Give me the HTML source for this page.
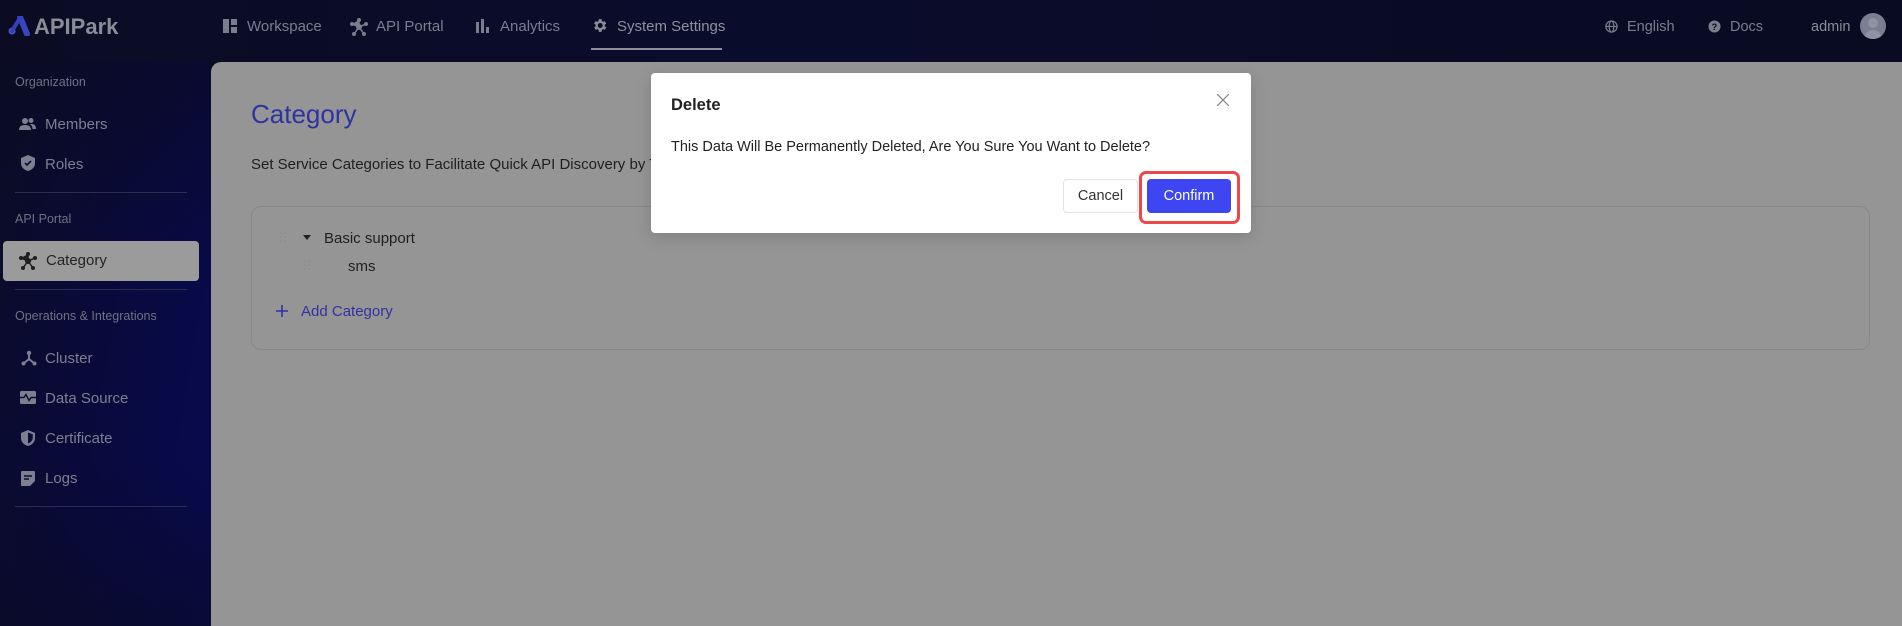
<!DOCTYPE html>
<html><head><meta charset="utf-8"><style>
*{box-sizing:border-box;margin:0;padding:0}
body{width:1902px;height:626px;overflow:hidden;font-family:"Liberation Sans",sans-serif;position:relative;background:#0a0b22}
.nav{position:absolute;left:0;top:0;width:1902px;height:62px;background:linear-gradient(90deg,#0b0c24 0%,#0a0c2c 40%,#090b22 100%)}
.side{position:absolute;left:0;top:62px;width:211px;height:564px;background:linear-gradient(100deg,#0b0c26 0%,#090a3c 50%,#070a52 100%)}
.side2{position:absolute;left:0;top:62px;width:211px;height:564px;background:linear-gradient(180deg,rgba(10,11,34,.6) 0%,rgba(10,11,34,0) 40%,rgba(10,11,34,0) 70%,rgba(10,11,34,.6) 100%)}
.main{position:absolute;left:211px;top:62px;width:1691px;height:564px;background:#959595;border-top-left-radius:10px}
.t{position:absolute;white-space:nowrap}
.nv{color:#7b7d8e;font-size:15px;top:18px}
.sl{color:#6f7184;font-size:12.5px}
.si{color:#7d7f91;font-size:15px}
.ic{position:absolute}
.div{position:absolute;left:38px;width:149px;height:1px;background:#2a2c50}
</style></head><body>
<div class="nav"></div>
<div class="side"></div>
<div class="side2"></div>
<div class="main"></div>

<svg class="ic" style="left:7px;top:16px" width="24" height="20" viewBox="0 0 24 20"><path d="M13 1 L20 18" stroke="#3a45c0" stroke-width="6" stroke-linecap="round"/><circle cx="5" cy="15" r="3.5" fill="#4a55c8"/><path d="M5 15 L13 2" stroke="#3540b8" stroke-width="4" stroke-linecap="round"/></svg>
<div class="t" style="left:34px;top:14px;font-size:22px;font-weight:bold;color:#8a8c98">APIPark</div>

<svg class="ic" style="left:223px;top:19px" width="14" height="14"><rect x="0" y="0" width="6" height="14" fill="#7b7d8e"/><rect x="8" y="0" width="6" height="6" fill="#7b7d8e"/><rect x="8" y="8" width="6" height="6" fill="#7b7d8e"/></svg>
<div class="t nv" style="left:247px">Workspace</div>
<svg class="ic" style="left:350px;top:18px" width="18" height="18" viewBox="0 0 18 18" fill="#7b7d8e"><circle cx="9" cy="9" r="3"/><circle cx="9" cy="2" r="2"/><circle cx="2" cy="6" r="2"/><circle cx="16" cy="6" r="2"/><circle cx="4" cy="16" r="2"/><circle cx="14" cy="16" r="2"/><path d="M9 2V9L2 6M9 9L16 6M9 9L4 16M9 9L14 16" stroke="#7b7d8e" stroke-width="1.5"/></svg>
<div class="t nv" style="left:376px">API Portal</div>
<svg class="ic" style="left:476px;top:19px" width="14" height="14"><rect x="0" y="3" width="3" height="11" fill="#7b7d8e"/><rect x="5" y="0" width="3" height="14" fill="#7b7d8e"/><rect x="10" y="8" width="3" height="6" fill="#7b7d8e"/></svg>
<div class="t nv" style="left:500px">Analytics</div>
<svg class="ic" style="left:591px;top:17px" width="17" height="17" viewBox="0 0 24 24"><path fill="#8a8c9a" d="M19.4 13a7.5 7.5 0 0 0 0-2l2.1-1.6-2-3.5-2.5 1a7 7 0 0 0-1.7-1L15 3h-4l-.4 2.9a7 7 0 0 0-1.7 1l-2.5-1-2 3.5L6.6 11a7.5 7.5 0 0 0 0 2l-2.1 1.6 2 3.5 2.5-1a7 7 0 0 0 1.7 1L11 21h4l.4-2.9a7 7 0 0 0 1.7-1l2.5 1 2-3.5zM13 15.5a3.5 3.5 0 1 1 0-7 3.5 3.5 0 0 1 0 7z"/></svg>
<div class="t nv" style="left:617px;color:#8e909c">System Settings</div>
<div class="ic" style="left:591px;top:48px;width:131px;height:2px;background:#8a8c98"></div>

<svg class="ic" style="left:1605px;top:20px" width="13" height="13" viewBox="0 0 14 14" fill="none" stroke="#7b7d8e" stroke-width="1.3"><circle cx="7" cy="7" r="6"/><ellipse cx="7" cy="7" rx="2.5" ry="6"/><path d="M1 7h12"/></svg>
<div class="t nv" style="left:1627px;font-size:14.5px;top:19px">English</div>
<svg class="ic" style="left:1708px;top:20px" width="13" height="13" viewBox="0 0 14 14"><circle cx="7" cy="7" r="6.5" fill="#7b7d8e"/><text x="7" y="11" font-size="10" font-weight="bold" text-anchor="middle" fill="#0a0c22" font-family="Liberation Sans">?</text></svg>
<div class="t nv" style="left:1730px;font-size:14.5px;top:19px">Docs</div>
<div class="t nv" style="left:1811px;font-size:14.5px;top:19px;color:#8a8c98">admin</div>
<div class="ic" style="left:1860px;top:13px;width:26px;height:26px;border-radius:50%;background:#7a7e92;overflow:hidden"><div style="position:absolute;left:8px;top:5px;width:10px;height:10px;border-radius:50%;background:#8e92a4"></div><div style="position:absolute;left:4px;top:17px;width:18px;height:12px;border-radius:9px 9px 0 0;background:#8e92a4"></div></div>

<div class="t sl" style="left:15px;top:75px">Organization</div>
<svg class="ic" style="left:19px;top:117px" width="17" height="14" viewBox="0 0 17 14" fill="#7d7f91"><circle cx="6" cy="4" r="3"/><path d="M0 13c0-4 3-5 6-5s6 1 6 5z"/><circle cx="12" cy="3.5" r="2.5"/><path d="M12 7c3 0 5 1 5 5h-3.5c0-2-1-4-2.5-4.6z"/></svg>
<div class="t si" style="left:45px;top:116px">Members</div>
<svg class="ic" style="left:21px;top:155px" width="14" height="16" viewBox="0 0 14 16"><path d="M7 0L14 3v5c0 4-3 7-7 8-4-1-7-4-7-8V3z" fill="#7d7f91"/><path d="M4 8l2 2 4-4" stroke="#0a0b2e" stroke-width="1.6" fill="none"/></svg>
<div class="t si" style="left:45px;top:156px">Roles</div>
<div class="div" style="left:15px;top:192px;width:172px"></div>
<div class="t sl" style="left:15px;top:212px">API Portal</div>
<div class="ic" style="left:3px;top:241px;width:196px;height:40px;background:#9b9b9b;border-radius:4px"></div>
<svg class="ic" style="left:19px;top:252px" width="18" height="18" viewBox="0 0 18 18" fill="#1e1e1e"><circle cx="9" cy="9" r="3"/><circle cx="9" cy="2" r="2"/><circle cx="2" cy="6" r="2"/><circle cx="16" cy="6" r="2"/><circle cx="4" cy="16" r="2"/><circle cx="14" cy="16" r="2"/><path d="M9 2V9L2 6M9 9L16 6M9 9L4 16M9 9L14 16" stroke="#1e1e1e" stroke-width="1.5"/></svg>
<div class="t" style="left:46px;top:252px;font-size:15px;color:#232323">Category</div>
<div class="div" style="left:15px;top:289px;width:172px"></div>
<div class="t sl" style="left:15px;top:309px">Operations &amp; Integrations</div>
<svg class="ic" style="left:21px;top:350px" width="16" height="16" viewBox="0 0 16 16" fill="#7d7f91"><circle cx="8" cy="3" r="2.2"/><circle cx="2.5" cy="13.5" r="2"/><circle cx="13.5" cy="13.5" r="2"/><path d="M8 3v6L2.5 13.5M8 9l5.5 4.5" stroke="#7d7f91" stroke-width="2" fill="none"/></svg>
<div class="t si" style="left:45px;top:350px">Cluster</div>
<svg class="ic" style="left:20px;top:391px" width="16" height="13" viewBox="0 0 16 13"><rect width="16" height="13" rx="1.5" fill="#7d7f91"/><path d="M0 6.5h4l2-3 3 6 2-3h5" stroke="#0a0b2e" stroke-width="1.4" fill="none"/></svg>
<div class="t si" style="left:45px;top:390px">Data Source</div>
<svg class="ic" style="left:21px;top:430px" width="14" height="16" viewBox="0 0 14 16"><path d="M7 0L14 3v5c0 4-3 7-7 8-4-1-7-4-7-8V3z" fill="#7d7f91"/><path d="M7 2.5v11c2.5-.8 4.8-3 4.8-6V4.3z" fill="#0a0b3a"/></svg>
<div class="t si" style="left:45px;top:430px">Certificate</div>
<svg class="ic" style="left:21px;top:471px" width="14" height="15" viewBox="0 0 14 15"><path d="M0 1a1 1 0 0 1 1-1h12a1 1 0 0 1 1 1v9l-5 5H1a1 1 0 0 1-1-1z" fill="#7d7f91"/><path d="M3 5h8M3 8h5" stroke="#0a0b2e" stroke-width="1.4"/></svg>
<div class="t si" style="left:45px;top:470px">Logs</div>
<div class="div" style="left:15px;top:506px;width:172px"></div>

<div class="t" style="left:251px;top:99px;font-size:26px;color:#2e33a0">Category</div>
<div class="t" style="left:251px;top:156px;font-size:15px;color:#1f1f1f">Set Service Categories to Facilitate Quick API Discovery by Teams</div>
<div class="ic" style="left:251px;top:206px;width:1619px;height:144px;border:1px solid #888;border-radius:10px"></div>
<svg class="ic" style="left:280px;top:232px" width="6" height="12" fill="#8a8a8a"><circle cx="1" cy="1" r="0.8"/><circle cx="5" cy="1" r="0.8"/><circle cx="1" cy="5" r="0.8"/><circle cx="5" cy="5" r="0.8"/><circle cx="1" cy="9" r="0.8"/><circle cx="5" cy="9" r="0.8"/></svg>
<svg class="ic" style="left:303px;top:235px" width="8" height="6"><path d="M0 0h8L4 5z" fill="#222"/></svg>
<div class="t" style="left:324px;top:230px;font-size:15px;color:#1f1f1f">Basic support</div>
<svg class="ic" style="left:304px;top:260px" width="6" height="12" fill="#8a8a8a"><circle cx="1" cy="1" r="0.8"/><circle cx="5" cy="1" r="0.8"/><circle cx="1" cy="5" r="0.8"/><circle cx="5" cy="5" r="0.8"/><circle cx="1" cy="9" r="0.8"/><circle cx="5" cy="9" r="0.8"/></svg>
<div class="t" style="left:348px;top:258px;font-size:15px;color:#1f1f1f">sms</div>
<svg class="ic" style="left:276px;top:305px" width="12" height="12"><path d="M6 0v12M0 6h12" stroke="#2e33a0" stroke-width="1.6"/></svg>
<div class="t" style="left:301px;top:303px;font-size:15px;color:#2e33a0">Add Category</div>

<div class="ic" style="left:651px;top:73px;width:600px;height:160px;background:#fff;border-radius:4px;box-shadow:0 4px 16px rgba(0,0,0,.15)"></div>
<div class="t" style="left:671px;top:96px;font-size:16.5px;font-weight:bold;color:#222">Delete</div>
<svg class="ic" style="left:1217px;top:94px" width="12" height="12"><path d="M0 0L12 12M12 0L0 12" stroke="#8a8a8a" stroke-width="1.3"/></svg>
<div class="t" style="left:671px;top:139px;font-size:14.5px;color:#222">This Data Will Be Permanently Deleted, Are You Sure You Want to Delete?</div>
<div class="ic" style="left:1063px;top:179px;width:75px;height:34px;border:1px solid #e2e2e2;border-radius:4px;font-size:14.5px;color:#333;text-align:center;line-height:33px">Cancel</div>
<div class="ic" style="left:1139px;top:171px;width:101px;height:53px;border:3px solid #ee4848;border-radius:7px"></div>
<div class="ic" style="left:1147px;top:179px;width:84px;height:34px;background:#3d46f0;border-radius:4px;font-size:14.5px;color:#fff;text-align:center;line-height:35px">Confirm</div>
</body></html>
